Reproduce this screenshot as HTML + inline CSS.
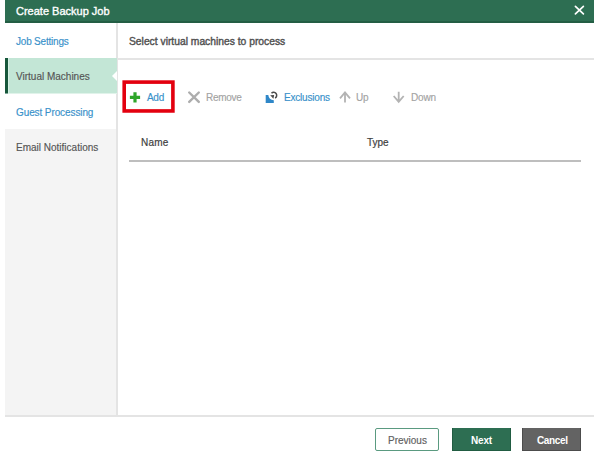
<!DOCTYPE html>
<html><head><meta charset="utf-8">
<style>
*{margin:0;padding:0;box-sizing:border-box}
html,body{width:600px;height:464px;overflow:hidden;background:#fff}
body{position:relative;font-family:"Liberation Sans",sans-serif;font-size:10px}
.a{position:absolute}
.t{position:absolute;white-space:nowrap;line-height:1;font-size:10px;-webkit-text-stroke:0.15px currentColor}
#title{left:5px;top:0;width:589px;height:23px;background:#2d6e52;border-bottom:2px solid #235e44}
#nav-gray{left:5px;top:129px;width:111px;height:286px;background:#f4f4f4}
#vdiv{left:116px;top:23px;width:2px;height:394px;background:#e4e4e4}
#vm{left:5px;top:58px;width:112px;height:35px;background:#c3e6d6;border-left:3px solid #17573b}
#hline{left:117px;top:58px;width:477px;height:2px;background:#e4e4e4}
#bline{left:5px;top:415px;width:589px;height:2px;background:#e4e4e4}
#thline{left:129px;top:160px;width:452px;height:2px;background:#bebebe}
.blue{color:#3891ca}
.gray{color:#a3a3a3}
.dark{color:#555}
.semi{-webkit-text-stroke:0.25px currentColor}
.btn{position:absolute;top:428px;height:23px}
#prev{left:375px;width:64px;border:1px solid #5a9a80;border-radius:2px}
#next{left:452px;width:59px;background:#2d6e52;border:1px solid #215c42;border-top:0}
#cancel{left:522px;width:59px;background:#636363;border:1px solid #4c4c4c;border-top:0}
</style></head><body>
<div id="title" class="a"></div>
<div class="t" style="left:16px;top:6px;font-size:11px;color:#fff;-webkit-text-stroke:0.35px #fff">Create Backup Job</div>
<svg class="a" style="left:570px;top:1px" width="18" height="18" viewBox="0 0 18 18"><path d="M5.4 5.4L13.4 12.9M13.4 5.4L5.4 12.9" stroke="#fff" stroke-width="1.7" stroke-linecap="round" fill="none"/></svg>

<div id="nav-gray" class="a"></div>
<div id="vdiv" class="a"></div>
<div id="vm" class="a"></div>
<div class="a" style="left:8px;top:58px;width:1px;height:35px;background:#d6f2e5"></div>
<div class="a" style="left:5px;top:93px;width:3px;height:1px;background:#7ea796"></div><div class="a" style="left:8px;top:93px;width:109px;height:1px;background:#e0f3ea"></div>
<svg class="a" style="left:112px;top:71px" width="5" height="10" viewBox="0 0 5 10"><path d="M5 0L0 5L5 10Z" fill="#fff"/></svg>
<div id="hline" class="a"></div>
<div id="bline" class="a"></div>

<div class="t blue" style="left:16px;top:37px;letter-spacing:-0.2px">Job Settings</div>
<div class="t dark" style="left:16px;top:72px">Virtual Machines</div>
<div class="t blue" style="left:16px;top:108px;letter-spacing:-0.1px">Guest Processing</div>
<div class="t dark" style="left:16px;top:143px">Email Notifications</div>

<div class="t dark semi" style="left:129px;top:37px;font-size:10.3px;-webkit-text-stroke:0.4px #4f4f4f">Select virtual machines to process</div>

<svg class="a" style="left:118px;top:76px" width="62" height="40" viewBox="118 76 62 40"><rect x="124.2" y="82.1" width="48.7" height="28.85" fill="none" stroke="#e3000f" stroke-width="3.6"/></svg>
<svg class="a" style="left:126px;top:88px" width="20" height="18" viewBox="126 88 20 18"><path d="M135 92.3V102.5M129.9 97.4H140.1" stroke="#2ea52a" stroke-width="3.2"/></svg>
<div class="t blue" style="left:147px;top:93px;letter-spacing:-0.3px">Add</div>

<svg class="a" style="left:184px;top:86px" width="20" height="20" viewBox="184 86 20 20"><path d="M189.2 92.5L198.8 101.9M198.8 92.5L189.2 101.9" stroke="#adadad" stroke-width="2.4" stroke-linecap="round" fill="none"/></svg>
<div class="t gray" style="left:206px;top:93px;letter-spacing:-0.3px">Remove</div>

<svg class="a" style="left:262px;top:86px" width="20" height="20" viewBox="262 86 20 20"><path d="M265.7 95H268.3A6 6 0 0 0 273.8 100.3V103H265.7Z" fill="#2f87c8"/><path d="M271.5 93.3A3 3 0 1 1 275.1 98" stroke="#4a4a4a" stroke-width="1.5" fill="none"/><path d="M270.2 95.3L274.2 95L273.4 98.8Z" fill="#4a4a4a"/></svg>
<div class="t blue" style="left:284px;top:93px;letter-spacing:-0.2px">Exclusions</div>

<svg class="a" style="left:335px;top:86px" width="20" height="20" viewBox="335 86 20 20"><path d="M345 92.5V102.5M340 98.3L345 92.5L350 98.3" stroke="#b3b3b3" stroke-width="1.8" fill="none"/></svg>
<div class="t gray" style="left:356px;top:93px;letter-spacing:-0.3px">Up</div>
<svg class="a" style="left:389px;top:86px" width="20" height="20" viewBox="389 86 20 20"><path d="M398.7 91.8V101.8M393.7 96L398.7 101.8L403.7 96" stroke="#b3b3b3" stroke-width="1.8" fill="none"/></svg>
<div class="t gray" style="left:411px;top:93px;letter-spacing:-0.15px">Down</div>

<div class="t dark" style="left:141px;top:138px;letter-spacing:0.2px;color:#3f3f3f;-webkit-text-stroke:0.2px #3f3f3f">Name</div>
<div class="t dark" style="left:367px;top:138px;color:#3f3f3f;-webkit-text-stroke:0.2px #3f3f3f">Type</div>
<div id="thline" class="a"></div>

<div id="prev" class="btn"></div>
<div class="t" style="left:388px;top:436px;color:#606060">Previous</div>
<div id="next" class="btn"></div>
<div class="t" style="left:471px;top:436px;color:#fff;font-size:10px;font-weight:bold;-webkit-text-stroke:0;letter-spacing:-0.2px">Next</div>
<div id="cancel" class="btn"></div>
<div class="t" style="left:537px;top:436px;color:#fff;font-size:10px;font-weight:bold;-webkit-text-stroke:0;letter-spacing:-0.35px">Cancel</div>
</body></html>
